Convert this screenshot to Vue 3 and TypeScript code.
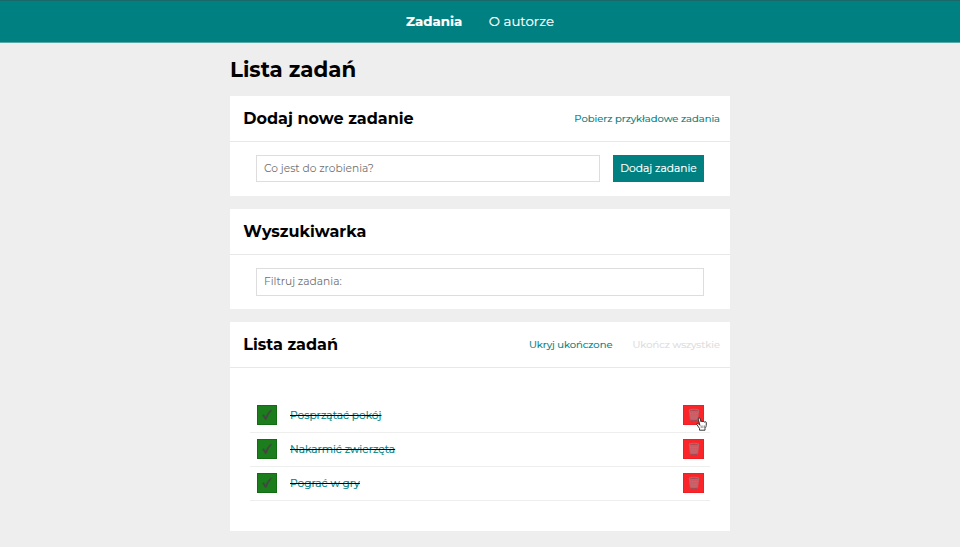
<script setup lang="ts">
import { ref } from 'vue'

interface Task {
  id: number
  content: string
  done: boolean
}

const newTask = ref('')
const query = ref('')
const tasks = ref<Task[]>([
  { id: 1, content: 'Posprzątać pokój', done: true },
  { id: 2, content: 'Nakarmić zwierzęta', done: true },
  { id: 3, content: 'Pograć w gry', done: true },
])

const addTask = () => {
  const content = newTask.value.trim()
  if (!content) return
  tasks.value.push({ id: Date.now(), content, done: false })
  newTask.value = ''
}
</script>

<template>
  <div class="page">
    <nav class="nav">
      <a class="nav-link active">Zadania</a>
      <a class="nav-link">O autorze</a>
    </nav>
    <main class="container">
      <h1 class="title">Lista zadań</h1>

      <section class="card">
        <header class="card-header">
          <h2 class="card-title">Dodaj nowe zadanie</h2>
          <button class="link">Pobierz przykładowe zadania</button>
        </header>
        <form class="form" @submit.prevent="addTask">
          <input v-model="newTask" class="input" placeholder="Co jest do zrobienia?" />
          <button class="submit">Dodaj zadanie</button>
        </form>
      </section>

      <section class="card">
        <header class="card-header">
          <h2 class="card-title">Wyszukiwarka</h2>
        </header>
        <div class="form">
          <input v-model="query" class="input filter" placeholder="Filtruj zadania:" />
        </div>
      </section>

      <section class="card">
        <header class="card-header">
          <h2 class="card-title">Lista zadań</h2>
          <button class="link">Ukryj ukończone</button>
          <button class="link finish" disabled>Ukończ wszystkie</button>
        </header>
        <ul class="list">
          <li v-for="(task, index) in tasks" :key="task.id" class="item">
            <button class="icon-button toggle" @click="task.done = !task.done">
              <svg v-if="task.done" width="12" height="12" viewBox="0 0 12 12">
                <path d="M1.2 6.600 2.800 5.500 4.500 8.200C5.900 5.100 7.400 2.900 9.800 1L10.700 1.400C8.300 4 6.800 6.700 5.500 10.300L4.100 10.700C3.300 9 2.400 7.700 1.200 6.600Z" fill="#454545" stroke="#454545" stroke-width=".3" />
              </svg>
            </button>
            <span class="content" :class="{ done: task.done }">{{ task.content }}</span>
            <button class="icon-button remove">
              <svg width="12" height="14" viewBox="0 0 12 14">
                <path d="M1.200 2.200 2.400 12.200Q6 13.700 9.600 12.200L10.800 2.200Z" fill="#d8505a" />
                <path d="M2.600 4 3.400 11.500M4.800 4 5 12M7.200 4 7 12M9.400 4 8.600 11.500M2 5.700H10M2.200 8H9.800M2.500 10H9.500" stroke="#bc7076" stroke-width=".7" fill="none" />
                <path d="M1.200 2.400 2.400 12.100Q6 13.500 9.600 12.100L10.800 2.400" stroke="#b8666c" stroke-width=".8" fill="none" />
                <ellipse cx="6" cy="2.300" rx="5" ry="1.100" fill="#ad444c" stroke="#ae7376" stroke-width=".9" />
                <path d="M2.600 12.200Q6 13.300 9.400 12.200" stroke="#a34850" stroke-width="1" fill="none" />
              </svg>
            </button>
            <svg v-if="index === 0" class="pointer" width="11" height="14" viewBox="0 0 11 14">
              <path d="M3.900 8.300 2.500 6.800C1.600 5.900 .3 6.700 1 7.800L3.500 11.400V13.200H9V11.400C9.900 10.200 10.300 9 10.300 7V5.600C10.300 4.500 8.900 4.500 8.700 5.300 8.600 4.200 7 4.100 6.800 5 6.600 3.900 5.100 3.900 5 4.800L4.100 1.700C3.700 .4 2 .8 2.300 2.200Z" fill="#fff" stroke="#222" stroke-width=".9" stroke-linejoin="round" />
              <path d="M5.200 8.500V11M6.900 8.500V11M8.500 8.500V11" stroke="#444" stroke-width=".6" />
            </svg>
          </li>
        </ul>
      </section>
    </main>
  </div>
</template>

<style>
body {
  background: #eee;
}
</style>

<style scoped>
.page {
  font-family: Montserrat, Inter, sans-serif;
  color: #000;
}

button,
input {
  font-family: inherit;
}

.nav {
  box-sizing: border-box;
  height: 43px;
  padding-bottom: 1px;
  border-top: 1px solid #1b686b;
  border-bottom: 1px solid #55a9a9;
  background: teal;
  display: flex;
  justify-content: center;
  align-items: center;
  gap: 26.67px;
  color: #fff;
  font-size: 13.33px;
}

.nav-link,
.link,
.submit,
.content {
  -webkit-text-stroke: 0.18px currentColor;
}

.active {
  font-weight: 700;
}

.container {
  width: 500px;
  margin: 0 auto;
}

.title {
  margin: 0;
  padding: 13px 0 14px;
  font-size: 21.33px;
  line-height: 26px;
}

.card {
  background: #fff;
  margin-bottom: 13px;
}

.card-header {
  display: flex;
  height: 45px;
  align-items: center;
  padding: 0 10px 0 13.33px;
  border-bottom: 1px solid #e8e8e8;
}

.card-title {
  font-size: 16px;
  margin: 0 auto 0 0;
}

.link {
  border: 0;
  padding: 0 0 1px;
  background: none;
  color: teal;
  font-size: 10px;
}

.finish {
  margin-left: 20px;
  color: #ddd;
}

.form {
  display: flex;
  gap: 13px;
  padding: 13px 26px 14px;
}

.input {
  box-sizing: border-box;
  flex: 1;
  min-width: 0;
  height: 27px;
  padding: 0 7px;
  border: 1px solid #ddd;
  background: #fff;
  font-size: 10.67px;
  outline: none;
}

.filter {
  height: 28px;
  margin-bottom: -1px;
  padding-bottom: 1px;
}

.input::placeholder {
  color: #6f6f6f;
}

.submit {
  width: 91px;
  height: 27px;
  padding: 0;
  border: 0;
  background: teal;
  color: #fff;
  font-size: 10.67px;
}

.list {
  list-style: none;
  margin: 0;
  padding: 31px 20px 30px;
}

.item {
  position: relative;
  box-sizing: border-box;
  display: flex;
  align-items: flex-start;
  height: 34px;
  padding: 6px 6px 0 7px;
  border-bottom: 1px solid #eee;
}

.icon-button {
  box-sizing: border-box;
  display: flex;
  align-items: center;
  justify-content: center;
  width: 20px;
  height: 20px;
  padding: 0;
}

.toggle {
  border: 1px solid #126d12;
  background: #1b7d1b;
}

.remove {
  width: 21px;
  border: 1px solid #ee2027;
  background: #fb2429;
}

.content {
  margin: 0 auto 0 13px;
  color: teal;
  font-size: 10.67px;
  line-height: 22px;
}

.done {
  text-decoration: line-through #000 1px;
}

.pointer {
  position: absolute;
  right: 3px;
  top: 18px;
}
</style>
